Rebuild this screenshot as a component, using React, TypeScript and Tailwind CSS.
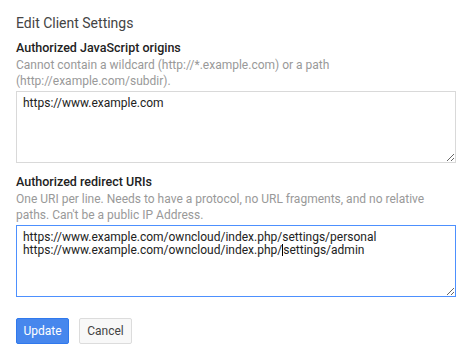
import React from 'react';

const Field: React.FC<{
  label: string;
  help: string;
  focused?: boolean;
  children: React.ReactNode;
}> = ({ label, help, focused, children }) => (
  <div>
    <div className="text-[12.5px] leading-4 font-medium text-[#222]">{label}</div>
    <div className="mt-px text-[12px] leading-4 text-[#999]">{help}</div>
    <div
      className={
        'mt-[2px] w-[440px] h-[72px] resize overflow-auto px-[6px] pt-[5px] text-[12px] leading-[13px] text-[#222] border ' +
        (focused ? 'border-[#4d90fe]' : 'border-[#d9d9d9]')
      }
    >
      {children}
    </div>
  </div>
);

export default function App() {
  return (
    <div className="bg-white min-h-[360px] pl-4 pt-[13px] font-['Roboto',sans-serif]">
      <h1 className="text-[14px] leading-5 text-[#444]">Edit Client Settings</h1>
      <div className="mt-[7px] flex flex-col gap-[11px]">
        <Field
          label="Authorized JavaScript origins"
          help="Cannot contain a wildcard (http://*.example.com) or a path (http://example.com/subdir)."
        >
          <div>https://www.example.com</div>
        </Field>
        <Field
          focused
          label="Authorized redirect URIs"
          help="One URI per line. Needs to have a protocol, no URL fragments, and no relative paths. Can't be a public IP Address."
        >
          <div>https://www.example.com/owncloud/index.php/settings/personal</div>
          <div>
            https://www.example.com/owncloud/index.php/
            <span className="inline-block w-px h-[12px] bg-black align-[-2px]" />
            settings/admin
          </div>
        </Field>
      </div>
      <div className="mt-[21px] flex gap-[10px]">
        <button className="h-[26px] w-[53px] rounded-[2px] border border-[#3079ed] bg-[#4787ed] text-[12px] text-white">
          Update
        </button>
        <button className="h-[26px] w-[53px] rounded-[2px] border border-[#dcdcdc] bg-[#f8f8f8] text-[12px] text-[#444]">
          Cancel
        </button>
      </div>
    </div>
  );
}
